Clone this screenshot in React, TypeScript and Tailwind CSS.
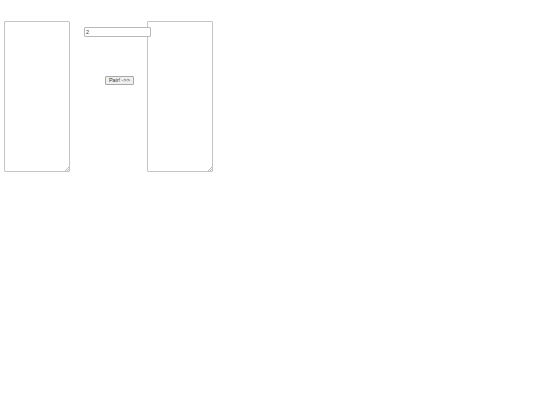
import { useState } from 'react';

function Grip() {
  return (
    <svg className="pointer-events-none absolute bottom-[1px] right-[1px]" width="5" height="5" viewBox="0 0 5 5">
      <path d="M5 1 L1 5 M5 3 L3 5" stroke="#a0a0a0" strokeWidth="0.7" />
    </svg>
  );
}

function Box({ value, onChange }: { value: string; onChange: (v: string) => void }) {
  return (
    <div className="relative h-[151px] w-[66px] shrink-0">
      <textarea
        value={value}
        onChange={(e) => onChange(e.target.value)}
        className="block h-full w-full resize-none rounded-[1px] border border-[#c4c4c4] bg-white p-[1px] text-[5px] outline-none"
      />
      <Grip />
    </div>
  );
}

export default function App() {
  const [left, setLeft] = useState('');
  const [right, setRight] = useState('');
  const [size, setSize] = useState('2');

  return (
    <div className="min-h-[405px] bg-white font-['Liberation_Sans',Arial,sans-serif]">
      <div className="flex items-start pl-[4px] pt-[21px]">
        <Box value={left} onChange={setLeft} />

        <div className="flex w-[77px] shrink-0 flex-col items-start pl-[14px] pt-[6px]">
          <input
            value={size}
            onChange={(e) => setSize(e.target.value)}
            className="relative z-10 h-[10px] w-[67px] rounded-[1px] border border-[#b8b8b8] bg-white px-[1px] text-[5.5px] leading-none text-[#333] outline-none"
          />
          <button className="ml-[21px] mt-[39px] flex h-[9px] w-[29px] items-center justify-center rounded-[1px] border border-[#a8a8a8] bg-[#efefef] text-[5.5px] leading-none text-[#333]">
            Pair! -&gt;&gt;
          </button>
        </div>

        <Box value={right} onChange={setRight} />
      </div>
    </div>
  );
}
